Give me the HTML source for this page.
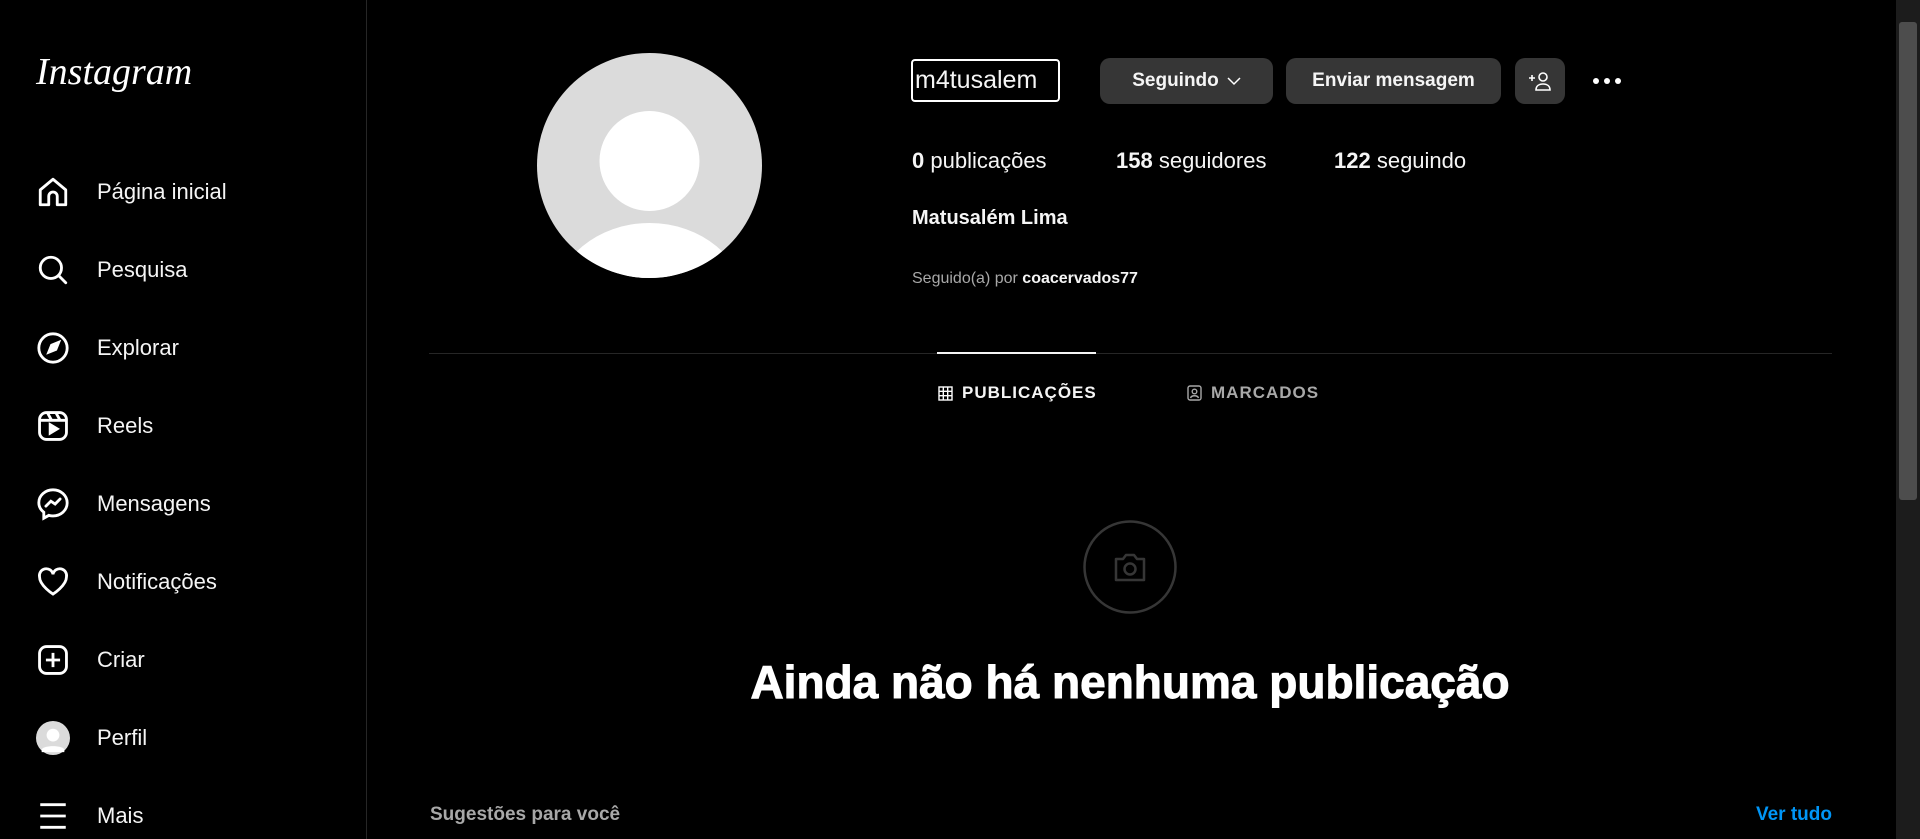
<!DOCTYPE html>
<html><head><meta charset="utf-8"><style>
*{margin:0;padding:0;box-sizing:border-box}
body{width:1920px;height:839px;background:#000;color:#f5f5f5;font-family:"Liberation Sans",sans-serif;overflow:hidden;position:relative}
.side{position:absolute;left:0;top:0;width:367px;height:839px;border-right:1px solid #262626}
.logo{position:absolute;left:36px;top:50px;font-family:"Liberation Serif",serif;font-style:italic;font-size:38px;color:#fff}
.item{position:absolute;left:36px;height:40px;display:flex;align-items:center;font-size:22px;color:#f5f5f5}
.item svg{width:34px;height:34px;margin-right:27px;flex:none}
.abs{position:absolute}
.btn{position:absolute;top:58px;height:46px;background:#363636;border-radius:10px;color:#f5f5f5;font-size:19px;font-weight:bold;display:flex;align-items:center;justify-content:center}
.t{position:absolute;font-size:22px;white-space:nowrap}
</style></head><body>
<div class="side">
<div class="logo">Instagram</div>
<div class="item" style="top:172px"><svg viewBox="0 0 24 24" fill="none" stroke="#fff" stroke-width="2"><path d="M3 10.5 12 3l9 7.5V21h-6v-6a3 3 0 0 0-6 0v6H3z" stroke-linejoin="round"/></svg>Página inicial</div>
<div class="item" style="top:250px"><svg viewBox="0 0 24 24" fill="none" stroke="#fff" stroke-width="2"><circle cx="10.5" cy="10.5" r="7.5"/><path d="M16 16l5 5" stroke-linecap="round"/></svg>Pesquisa</div>
<div class="item" style="top:328px"><svg viewBox="0 0 24 24" fill="none" stroke="#fff" stroke-width="2"><circle cx="12" cy="12" r="10"/><path d="M9 15l2-5 5-2-2 5z" fill="#fff"/></svg>Explorar</div>
<div class="item" style="top:406px"><svg viewBox="0 0 24 24" fill="none" stroke="#fff" stroke-width="2"><rect x="2.5" y="2.5" width="19" height="19" rx="5"/><path d="M2.5 8h19M8 2.5l3 5.5M14 2.5l3 5.5"/><path d="M10 11v6l5-3z" fill="#fff"/></svg>Reels</div>
<div class="item" style="top:484px"><svg viewBox="0 0 24 24" fill="none" stroke="#fff" stroke-width="2"><path d="M12 2C6.5 2 2 6 2 11c0 2.8 1.4 5.2 3.5 6.8V22l3.6-2c1 .3 1.9.4 2.9.4 5.5 0 10-4 10-9.2S17.5 2 12 2z"/><path d="M7 13.5l3.5-3.5 3 2 3.5-3.5" stroke-linecap="round"/></svg>Mensagens</div>
<div class="item" style="top:562px"><svg viewBox="0 0 24 24" fill="none" stroke="#fff" stroke-width="2"><path d="M12 20.5S2.5 14.5 2.5 8.5A4.8 4.8 0 0 1 12 6.5a4.8 4.8 0 0 1 9.5 2c0 6-9.5 12-9.5 12z"/></svg>Notificações</div>
<div class="item" style="top:640px"><svg viewBox="0 0 24 24" fill="none" stroke="#fff" stroke-width="2"><rect x="2.5" y="2.5" width="19" height="19" rx="5"/><path d="M12 7v10M7 12h10"/></svg>Criar</div>
<div class="item" style="top:718px"><svg viewBox="0 0 24 24"><circle cx="12" cy="12" r="12" fill="#dbdbdb"/><circle cx="12" cy="10" r="4.5" fill="#fff"/><path d="M4 20c2-3 14-3 16 0v2H4z" fill="#fff"/></svg>Perfil</div>
<div class="item" style="top:796px"><svg viewBox="0 0 24 24" fill="none" stroke="#fff" stroke-width="2"><path d="M3 4h18M3 12h18M3 20h18"/></svg>Mais</div>
</div>

<svg class="abs" style="left:537px;top:53px" width="225" height="225" viewBox="0 0 225 225"><defs><clipPath id="c"><circle cx="112.5" cy="112.5" r="112.5"/></clipPath></defs><circle cx="112.5" cy="112.5" r="112.5" fill="#dbdbdb"/><g clip-path="url(#c)"><circle cx="112.5" cy="108" r="50" fill="#fff"/><ellipse cx="112.5" cy="250" rx="95" ry="80" fill="#fff"/></g></svg>

<div class="abs" style="left:911px;top:59px;width:149px;height:43px;border:2px solid #fff;border-radius:4px;font-size:25px;line-height:39px;padding-left:2px;">m4tusalem</div>
<div class="btn" style="left:1100px;width:173px">Seguindo <svg width="14" height="10" viewBox="0 0 14 10" style="margin-left:8px"><path d="M1 2l6 6 6-6" fill="none" stroke="#fff" stroke-width="1.5"/></svg></div>
<div class="btn" style="left:1286px;width:215px">Enviar mensagem</div>
<div class="btn" style="left:1515px;width:50px"><svg width="24" height="20" viewBox="0 0 24 20" fill="none" stroke="#fff" stroke-width="1.6"><path d="M1 7h6M4 4v6"/><circle cx="15" cy="6" r="4"/><path d="M8 19c0-4 3-6 7-6s7 2 7 6z"/></svg></div>
<div class="abs" style="left:1593px;top:78px;display:flex;gap:5px"><i style="width:6px;height:6px;background:#fff;border-radius:50%"></i><i style="width:6px;height:6px;background:#fff;border-radius:50%"></i><i style="width:6px;height:6px;background:#fff;border-radius:50%"></i></div>

<div class="t" style="left:912px;top:148px"><b>0</b> publicações</div>
<div class="t" style="left:1116px;top:148px"><b>158</b> seguidores</div>
<div class="t" style="left:1334px;top:148px"><b>122</b> seguindo</div>
<div class="t" style="left:912px;top:207px;font-size:20px;font-weight:bold">Matusalém Lima</div>
<div class="t" style="left:912px;top:270px;font-size:16px;color:#a8a8a8">Seguido(a) por <b style="color:#f5f5f5">coacervados77</b></div>

<div class="abs" style="left:429px;top:353px;width:1403px;height:1px;background:#262626"></div>
<div class="abs" style="left:937px;top:352px;width:159px;height:2px;background:#f5f5f5"></div>
<div class="t" style="left:938px;top:383px;font-size:17px;font-weight:bold;letter-spacing:1px;display:flex;align-items:center"><svg width="15" height="15" viewBox="0 0 15 15" fill="none" stroke="#fff" stroke-width="1.4" style="margin-right:9px"><rect x="1" y="1" width="13" height="13"/><path d="M5.3 1v13M9.7 1v13M1 5.3h13M1 9.7h13"/></svg>PUBLICAÇÕES</div>
<div class="t" style="left:1187px;top:383px;font-size:17px;font-weight:bold;letter-spacing:1px;color:#a8a8a8;display:flex;align-items:center"><svg width="15" height="16" viewBox="0 0 15 16" fill="none" stroke="#a8a8a8" stroke-width="1.4" style="margin-right:9px"><rect x="1" y="1" width="13" height="14" rx="2"/><circle cx="7.5" cy="6.5" r="2.3"/><path d="M3.5 13c1-3 7-3 8 0"/></svg>MARCADOS</div>

<svg class="abs" style="left:1083px;top:520px" width="94" height="94" viewBox="0 0 94 94"><circle cx="47" cy="47" r="45.5" fill="none" stroke="#363636" stroke-width="2.5"/><path d="M33 39h7l3-4h8l3 4h7v21H33z" fill="none" stroke="#363636" stroke-width="2.5" stroke-linejoin="round"/><circle cx="47" cy="49" r="5.5" fill="none" stroke="#363636" stroke-width="2.5"/></svg>
<div class="t" style="left:0;width:2260px;text-align:center;top:655px;font-size:46px;font-weight:bold;color:#fff;-webkit-text-stroke:1px #fff">Ainda não há nenhuma publicação</div>

<div class="t" style="left:430px;top:804px;font-size:19px;font-weight:bold;color:#a8a8a8">Sugestões para você</div>
<div class="t" style="left:1750px;width:82px;text-align:right;top:804px;font-size:19px;font-weight:bold;color:#0095f6">Ver tudo</div>

<div class="abs" style="left:1896px;top:0;width:24px;height:839px;background:#1c1c1c"></div>
<div class="abs" style="left:1899px;top:22px;width:18px;height:478px;background:#4d4d4d;border-radius:3px"></div>
</body></html>
